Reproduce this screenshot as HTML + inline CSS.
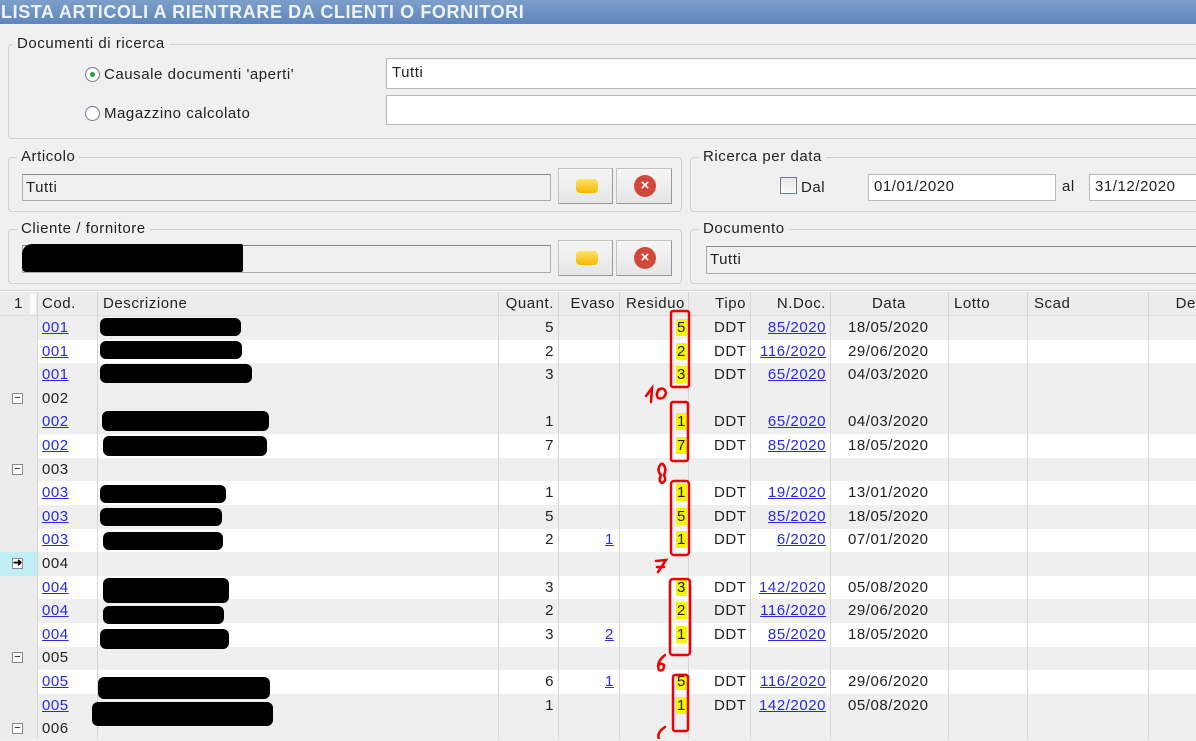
<!DOCTYPE html>
<html><head><meta charset="utf-8"><style>
*{box-sizing:border-box;margin:0;padding:0}
body{width:1196px;height:739px;overflow:hidden;background:#f0f0f0;font-family:"Liberation Sans",sans-serif;font-size:15px;letter-spacing:0.55px;color:#222;position:relative}
.a{position:absolute}
.title{left:0;top:0;width:1196px;height:24px;background:linear-gradient(#7d9fcb,#5f86bb);color:#eef3fb;font-weight:bold;font-size:18px;letter-spacing:0.6px;padding:1px 0 0 1px;line-height:22px}
.gb{border:1px solid #cfcfcf;border-radius:4px}
.lg{background:#f0f0f0;padding:0 4px;line-height:16px}
.inp{background:#fff;border:1px solid #b9b9b9;padding:3px 5px}
.ro{background:#f0f0f0;border:1px solid #a9a9a9;border-top-color:#8a8a8a;padding:4px 3px}
.btn{background:linear-gradient(#f6f6f6,#e6e6e6);border:1px solid #c4c4c4;border-bottom-color:#9a9a9a;border-right-color:#9a9a9a}
.fold{width:22px;height:14px;border-radius:4px;background:linear-gradient(#ffe36a,#f5b800);left:17px;top:10px}
.x{width:22px;height:22px;border-radius:50%;background:#d0483a;color:#fff;font-weight:bold;font-size:15px;text-align:center;line-height:22px;left:17px;top:6px;letter-spacing:0}
.hd{top:292px;height:24px;background:#ececec;border-bottom:1px solid #dcdcdc}
.c{position:absolute;top:0;height:24px;line-height:24px;padding:0 4px;white-space:nowrap}
.vl{position:absolute;top:292px;height:447px;width:1px;background:#d6d6d6}
.r{position:absolute;left:37px;width:1159px;height:24px}
.g{background:#efefef}.w{background:#fff}
.t{position:absolute;top:0;line-height:24px;white-space:nowrap}
.lk{color:#2a2ae0;text-decoration:underline}
.rt{text-align:right}
.y{background:#f5f500;padding:0 1px}
.bk{position:absolute;background:#000;border-radius:6px}
.ind{position:absolute;left:12px;width:11px;height:11px;border:1px solid #888;background:#fff;font-size:11px;line-height:8px;text-align:center;color:#000;letter-spacing:0}
</style></head><body>
<div class="a title">LISTA ARTICOLI A RIENTRARE DA CLIENTI O FORNITORI</div>

<div class="a gb" style="left:8px;top:44px;width:1200px;height:95px"></div>
<div class="a lg" style="left:13px;top:36px">Documenti di ricerca</div>
<div class="a" style="left:85px;top:67px;width:15px;height:15px;border-radius:50%;border:1px solid #6d7b8a;background:#fff"></div>
<div class="a" style="left:90px;top:72px;width:5px;height:5px;border-radius:50%;background:#2c9a3c"></div>
<div class="a" style="left:104px;top:66px">Causale documenti 'aperti'</div>
<div class="a" style="left:85px;top:106px;width:15px;height:15px;border-radius:50%;border:1px solid #6d7b8a;background:#fff"></div>
<div class="a" style="left:104px;top:105px">Magazzino calcolato</div>
<div class="a inp" style="left:386px;top:58px;width:820px;height:31px;line-height:22px">Tutti</div>
<div class="a inp" style="left:386px;top:95px;width:820px;height:30px"></div>

<div class="a gb" style="left:8px;top:157px;width:674px;height:55px"></div>
<div class="a lg" style="left:17px;top:149px">Articolo</div>
<div class="a ro" style="left:22px;top:174px;width:529px;height:27px">Tutti</div>
<div class="a btn" style="left:558px;top:168px;width:55px;height:36px"><div class="a fold"></div></div>
<div class="a btn" style="left:616px;top:168px;width:56px;height:36px"><div class="a x">×</div></div>

<div class="a gb" style="left:690px;top:157px;width:520px;height:55px"></div>
<div class="a lg" style="left:699px;top:149px">Ricerca per data</div>
<div class="a" style="left:780px;top:177px;width:17px;height:17px;border:1px solid #6d7b8a;background:linear-gradient(#e8e8e8,#fafafa)"></div>
<div class="a" style="left:801px;top:179px">Dal</div>
<div class="a inp" style="left:868px;top:174px;width:188px;height:27px">01/01/2020</div>
<div class="a" style="left:1062px;top:178px">al</div>
<div class="a inp" style="left:1089px;top:174px;width:120px;height:27px">31/12/2020</div>

<div class="a gb" style="left:8px;top:229px;width:674px;height:55px"></div>
<div class="a lg" style="left:17px;top:221px">Cliente / fornitore</div>
<div class="a ro" style="left:22px;top:245px;width:529px;height:28px"></div>
<div class="bk" style="left:22px;top:244px;width:221px;height:28px;border-radius:10px 2px 2px 4px"></div>
<div class="a btn" style="left:558px;top:240px;width:55px;height:36px"><div class="a fold"></div></div>
<div class="a btn" style="left:616px;top:240px;width:56px;height:36px"><div class="a x">×</div></div>

<div class="a gb" style="left:690px;top:229px;width:520px;height:55px"></div>
<div class="a lg" style="left:699px;top:221px">Documento</div>
<div class="a ro" style="left:706px;top:246px;width:500px;height:28px">Tutti</div>

<div class="a" style="left:0;top:290px;width:1196px;height:449px;background:#fff;border-top:1px solid #d0d0d0"></div>
<div class="a" style="left:0;top:292px;width:37px;height:447px;background:#ececec"></div>
<div class="a hd" style="left:0;width:1196px">
 <div class="c" style="left:10px">1</div>
 <div class="a" style="left:30px;top:2px;width:6px;height:20px;background:#fafafa"></div>
 <div class="c" style="left:38px">Cod.</div>
 <div class="c" style="left:99px">Descrizione</div>
 <div class="c rt" style="left:498px;width:60px">Quant.</div>
 <div class="c rt" style="left:558px;width:61px">Evaso</div>
 <div class="c" style="left:622px">Residuo</div>
 <div class="c rt" style="left:688px;width:62px">Tipo</div>
 <div class="c rt" style="left:750px;width:80px">N.Doc.</div>
 <div class="c" style="left:830px;width:118px;text-align:center">Data</div>
 <div class="c" style="left:950px">Lotto</div>
 <div class="c" style="left:1030px">Scad</div>
 <div class="c rt" style="left:1148px;width:60px">Des</div>
</div>

<div class="r g" style="top:316px"></div><div class="r w" style="top:340px"></div><div class="r g" style="top:363px"></div><div class="r g" style="top:387px"></div><div class="r g" style="top:411px"></div><div class="r w" style="top:434px"></div><div class="r g" style="top:458px"></div><div class="r w" style="top:481px"></div><div class="r g" style="top:505px"></div><div class="r w" style="top:529px"></div><div class="r g" style="top:552px"></div><div class="r w" style="top:576px"></div><div class="r g" style="top:599px"></div><div class="r w" style="top:623px"></div><div class="r g" style="top:647px"></div><div class="r w" style="top:670px"></div><div class="r g" style="top:694px"></div><div class="r g" style="top:717px"></div>
<div class="a" style="left:0;top:552px;width:37px;height:24px;background:#bfeef4"></div>

<div class="vl" style="left:37px"></div><div class="vl" style="left:97px"></div><div class="vl" style="left:498px"></div><div class="vl" style="left:558px"></div><div class="vl" style="left:619px"></div><div class="vl" style="left:688px"></div><div class="vl" style="left:750px"></div><div class="vl" style="left:830px"></div><div class="vl" style="left:948px"></div><div class="vl" style="left:1027px"></div><div class="vl" style="left:1148px"></div>

<div class="a" style="left:0;top:316px;width:1196px">
<div style="position:relative;height:23.6px"><span class="t lk" style="left:42px">001</span><span class="t rt" style="left:498px;width:56px">5</span><span class="t" style="left:676px"><span class="y">5</span></span><span class="t" style="left:714px">DDT</span><span class="t rt lk" style="left:750px;width:76px">85/2020</span><span class="t" style="left:848px">18/05/2020</span></div>
<div style="position:relative;height:23.6px"><span class="t lk" style="left:42px">001</span><span class="t rt" style="left:498px;width:56px">2</span><span class="t" style="left:676px"><span class="y">2</span></span><span class="t" style="left:714px">DDT</span><span class="t rt lk" style="left:750px;width:76px">116/2020</span><span class="t" style="left:848px">29/06/2020</span></div>
<div style="position:relative;height:23.6px"><span class="t lk" style="left:42px">001</span><span class="t rt" style="left:498px;width:56px">3</span><span class="t" style="left:676px"><span class="y">3</span></span><span class="t" style="left:714px">DDT</span><span class="t rt lk" style="left:750px;width:76px">65/2020</span><span class="t" style="left:848px">04/03/2020</span></div>
<div style="position:relative;height:23.6px"><span class="ind" style="top:6px">−</span><span class="t" style="left:42px">002</span></div>
<div style="position:relative;height:23.6px"><span class="t lk" style="left:42px">002</span><span class="t rt" style="left:498px;width:56px">1</span><span class="t" style="left:676px"><span class="y">1</span></span><span class="t" style="left:714px">DDT</span><span class="t rt lk" style="left:750px;width:76px">65/2020</span><span class="t" style="left:848px">04/03/2020</span></div>
<div style="position:relative;height:23.6px"><span class="t lk" style="left:42px">002</span><span class="t rt" style="left:498px;width:56px">7</span><span class="t" style="left:676px"><span class="y">7</span></span><span class="t" style="left:714px">DDT</span><span class="t rt lk" style="left:750px;width:76px">85/2020</span><span class="t" style="left:848px">18/05/2020</span></div>
<div style="position:relative;height:23.6px"><span class="ind" style="top:6px">−</span><span class="t" style="left:42px">003</span></div>
<div style="position:relative;height:23.6px"><span class="t lk" style="left:42px">003</span><span class="t rt" style="left:498px;width:56px">1</span><span class="t" style="left:676px"><span class="y">1</span></span><span class="t" style="left:714px">DDT</span><span class="t rt lk" style="left:750px;width:76px">19/2020</span><span class="t" style="left:848px">13/01/2020</span></div>
<div style="position:relative;height:23.6px"><span class="t lk" style="left:42px">003</span><span class="t rt" style="left:498px;width:56px">5</span><span class="t" style="left:676px"><span class="y">5</span></span><span class="t" style="left:714px">DDT</span><span class="t rt lk" style="left:750px;width:76px">85/2020</span><span class="t" style="left:848px">18/05/2020</span></div>
<div style="position:relative;height:23.6px"><span class="t lk" style="left:42px">003</span><span class="t rt" style="left:498px;width:56px">2</span><span class="t lk" style="left:605px">1</span><span class="t" style="left:676px"><span class="y">1</span></span><span class="t" style="left:714px">DDT</span><span class="t rt lk" style="left:750px;width:76px">6/2020</span><span class="t" style="left:848px">07/01/2020</span></div>
<div style="position:relative;height:23.6px"><span class="ind" style="top:6px;line-height:9px;font-weight:bold">➜</span><span class="t" style="left:42px">004</span></div>
<div style="position:relative;height:23.6px"><span class="t lk" style="left:42px">004</span><span class="t rt" style="left:498px;width:56px">3</span><span class="t" style="left:676px"><span class="y">3</span></span><span class="t" style="left:714px">DDT</span><span class="t rt lk" style="left:750px;width:76px">142/2020</span><span class="t" style="left:848px">05/08/2020</span></div>
<div style="position:relative;height:23.6px"><span class="t lk" style="left:42px">004</span><span class="t rt" style="left:498px;width:56px">2</span><span class="t" style="left:676px"><span class="y">2</span></span><span class="t" style="left:714px">DDT</span><span class="t rt lk" style="left:750px;width:76px">116/2020</span><span class="t" style="left:848px">29/06/2020</span></div>
<div style="position:relative;height:23.6px"><span class="t lk" style="left:42px">004</span><span class="t rt" style="left:498px;width:56px">3</span><span class="t lk" style="left:605px">2</span><span class="t" style="left:676px"><span class="y">1</span></span><span class="t" style="left:714px">DDT</span><span class="t rt lk" style="left:750px;width:76px">85/2020</span><span class="t" style="left:848px">18/05/2020</span></div>
<div style="position:relative;height:23.6px"><span class="ind" style="top:6px">−</span><span class="t" style="left:42px">005</span></div>
<div style="position:relative;height:23.6px"><span class="t lk" style="left:42px">005</span><span class="t rt" style="left:498px;width:56px">6</span><span class="t lk" style="left:605px">1</span><span class="t" style="left:676px"><span class="y">5</span></span><span class="t" style="left:714px">DDT</span><span class="t rt lk" style="left:750px;width:76px">116/2020</span><span class="t" style="left:848px">29/06/2020</span></div>
<div style="position:relative;height:23.6px"><span class="t lk" style="left:42px">005</span><span class="t rt" style="left:498px;width:56px">1</span><span class="t" style="left:676px"><span class="y">1</span></span><span class="t" style="left:714px">DDT</span><span class="t rt lk" style="left:750px;width:76px">142/2020</span><span class="t" style="left:848px">05/08/2020</span></div>
<div style="position:relative;height:23.6px"><span class="ind" style="top:6px">−</span><span class="t" style="left:42px">006</span></div>
</div>

<div class="bk" style="left:100px;top:318px;width:141px;height:18px"></div>
<div class="bk" style="left:100px;top:341px;width:142px;height:18px"></div>
<div class="bk" style="left:100px;top:364px;width:152px;height:19px"></div>
<div class="bk" style="left:102px;top:411px;width:167px;height:20px"></div>
<div class="bk" style="left:103px;top:436px;width:164px;height:20px"></div>
<div class="bk" style="left:100px;top:485px;width:126px;height:18px"></div>
<div class="bk" style="left:100px;top:508px;width:122px;height:18px"></div>
<div class="bk" style="left:103px;top:532px;width:120px;height:18px"></div>
<div class="bk" style="left:103px;top:578px;width:126px;height:25px"></div>
<div class="bk" style="left:103px;top:606px;width:121px;height:18px"></div>
<div class="bk" style="left:100px;top:629px;width:129px;height:20px"></div>
<div class="bk" style="left:98px;top:677px;width:172px;height:22px"></div>
<div class="bk" style="left:92px;top:702px;width:181px;height:24px"></div>

<svg class="a" style="left:0;top:0" width="1196" height="739" fill="none" stroke="#e00" stroke-width="2.5" stroke-linecap="round">
<rect x="671" y="311" width="18" height="76" rx="2"/>
<rect x="671" y="402" width="17" height="59" rx="2"/>
<rect x="671" y="481" width="18" height="74" rx="3"/>
<rect x="670" y="579" width="20" height="76" rx="3"/>
<rect x="673" y="675" width="15" height="56" rx="2"/>
<path d="M646 396 L652 388 L651 402 M658 390 Q664 386 666 393 Q664 400 658 398 Q655 393 660 389"/>
<path d="M661 464 Q656 470 661 475 Q658 481 662 483 Q667 481 664 475 Q667 469 663 464 Z"/>
<path d="M656 561 L666 560 L658 572 M657 567 L664 567"/>
<path d="M665 655 Q656 662 659 670 Q664 672 664 665 Q660 662 658 666"/>
<path d="M665 727 Q656 733 659 739"/>
</svg>
</body></html>
